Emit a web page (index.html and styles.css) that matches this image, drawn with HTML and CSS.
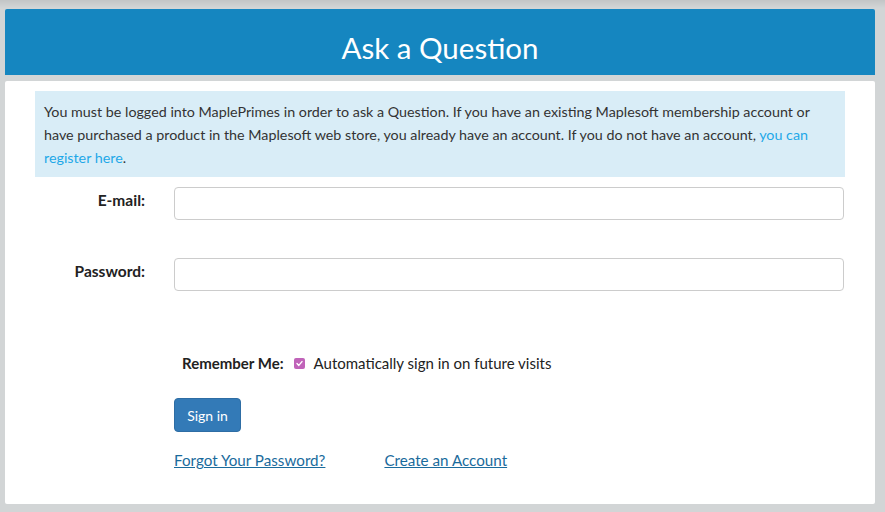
FILE: index.html
```html
<!DOCTYPE html>
<html lang="en">
<head>
<meta charset="utf-8">
<title>Ask a Question</title>
<link rel="stylesheet" href="styles.css">
</head>
<body>
<div class="page">
  <header class="banner">
    <h1 class="banner-title">Ask a Question</h1>
  </header>
  <main class="card">
    <div class="notice">
      You must be logged into MaplePrimes in order to ask a Question. If you have an existing Maplesoft membership account or have purchased a product in the Maplesoft web store, you already have an account. If you do not have an account, <a class="notice-link" href="#">you can register here</a>.
    </div>
    <form class="login-form">
      <div class="field-row">
        <label class="field-label" for="email">E-mail:</label>
        <input class="field-input" id="email" type="text">
      </div>
      <div class="field-row">
        <label class="field-label" for="password">Password:</label>
        <input class="field-input" id="password" type="password">
      </div>
      <div class="remember-row">
        <span class="remember-label">Remember Me:</span>
        <span class="checkbox">
          <svg width="11" height="11" viewBox="0 0 11 11"><rect x="0" y="0" width="11" height="11" rx="2" fill="#c063b9"/><path d="M3 5.6 L4.8 7.4 L8 3.6" fill="none" stroke="#ffffff" stroke-width="1.4" stroke-linecap="round" stroke-linejoin="round"/></svg>
        </span>
        <span class="remember-text">Automatically sign in on future visits</span>
      </div>
      <div class="action-row">
        <button class="btn-signin" type="button">Sign in</button>
      </div>
      <div class="links-row">
        <a class="form-link" href="#">Forgot Your Password?</a>
        <a class="form-link" href="#">Create an Account</a>
      </div>
    </form>
  </main>
</div>
</body>
</html>
```

FILE: styles.css
```css
html, body {
  margin: 0;
  padding: 0;
}
body {
  background: linear-gradient(to bottom, #c2c5c6 0px, #d2d5d6 8px, #d2d5d6 100%);
  font-family: Lato, "Open Sans", "Liberation Sans", sans-serif;
  color: #333333;
  width: 885px;
  height: 512px;
  overflow: hidden;
}
.page {
  padding: 9px 10px 0 5px;
}
.banner {
  background: #1586c0;
  height: 66px;
  display: flex;
  align-items: center;
  justify-content: center;
  border-radius: 2px 2px 0 0;
}
.banner-title {
  margin: 0;
  color: #ffffff;
  font-weight: 400;
  font-size: 29.5px;
  line-height: 36px;
  padding-top: 11px;
}
.card {
  margin-top: 6px;
  background: #ffffff;
  height: 423px;
  box-sizing: border-box;
  padding: 10px 30px 0 30px;
  border-radius: 2px;
}
.notice {
  background: #d9edf7;
  font-size: 14.3px;
  line-height: 23px;
  padding: 9px 9px 9px 9px;
  height: 86px;
  box-sizing: border-box;
  color: #333333;
}
.notice-link {
  color: #1ea8e8;
  text-decoration: none;
}
.login-form {
  display: flex;
  flex-direction: column;
}
.field-row {
  display: grid;
  grid-template-columns: 110px 670px;
  column-gap: 29px;
  align-items: start;
  margin-top: 10px;
}
.field-row + .field-row {
  margin-top: 38px;
}
.field-label {
  text-align: right;
  font-weight: 700;
  font-size: 15.5px;
  line-height: 20px;
  padding-top: 3px;
  color: #222222;
}
.field-input {
  height: 33px;
  box-sizing: border-box;
  border: 1px solid #cccccc;
  border-radius: 4px;
  margin: 0;
  padding: 6px 12px;
  font-family: inherit;
  font-size: 14px;
  background: #ffffff;
}
.remember-row {
  display: flex;
  align-items: center;
  margin-top: 62px;
  padding-left: 147px;
  height: 20px;
}
.remember-label {
  font-weight: 700;
  font-size: 15px;
  color: #222222;
}
.checkbox {
  display: flex;
  margin-left: 10px;
  margin-right: 9px;
}
.remember-text {
  font-size: 15px;
  color: #222222;
}
.action-row {
  display: flex;
  padding-left: 139px;
  margin-top: 25px;
}
.btn-signin {
  background: #337ab7;
  color: #ffffff;
  border: 1px solid #2e6da4;
  border-radius: 4px;
  font-family: inherit;
  font-size: 14px;
  height: 34px;
  width: 67px;
  padding: 0;
}
.links-row {
  display: flex;
  gap: 59px;
  padding-left: 139px;
  margin-top: 18px;
}
.form-link {
  color: #1a6b9c;
  font-size: 15.2px;
  line-height: 20px;
  text-decoration: underline;
}
```
